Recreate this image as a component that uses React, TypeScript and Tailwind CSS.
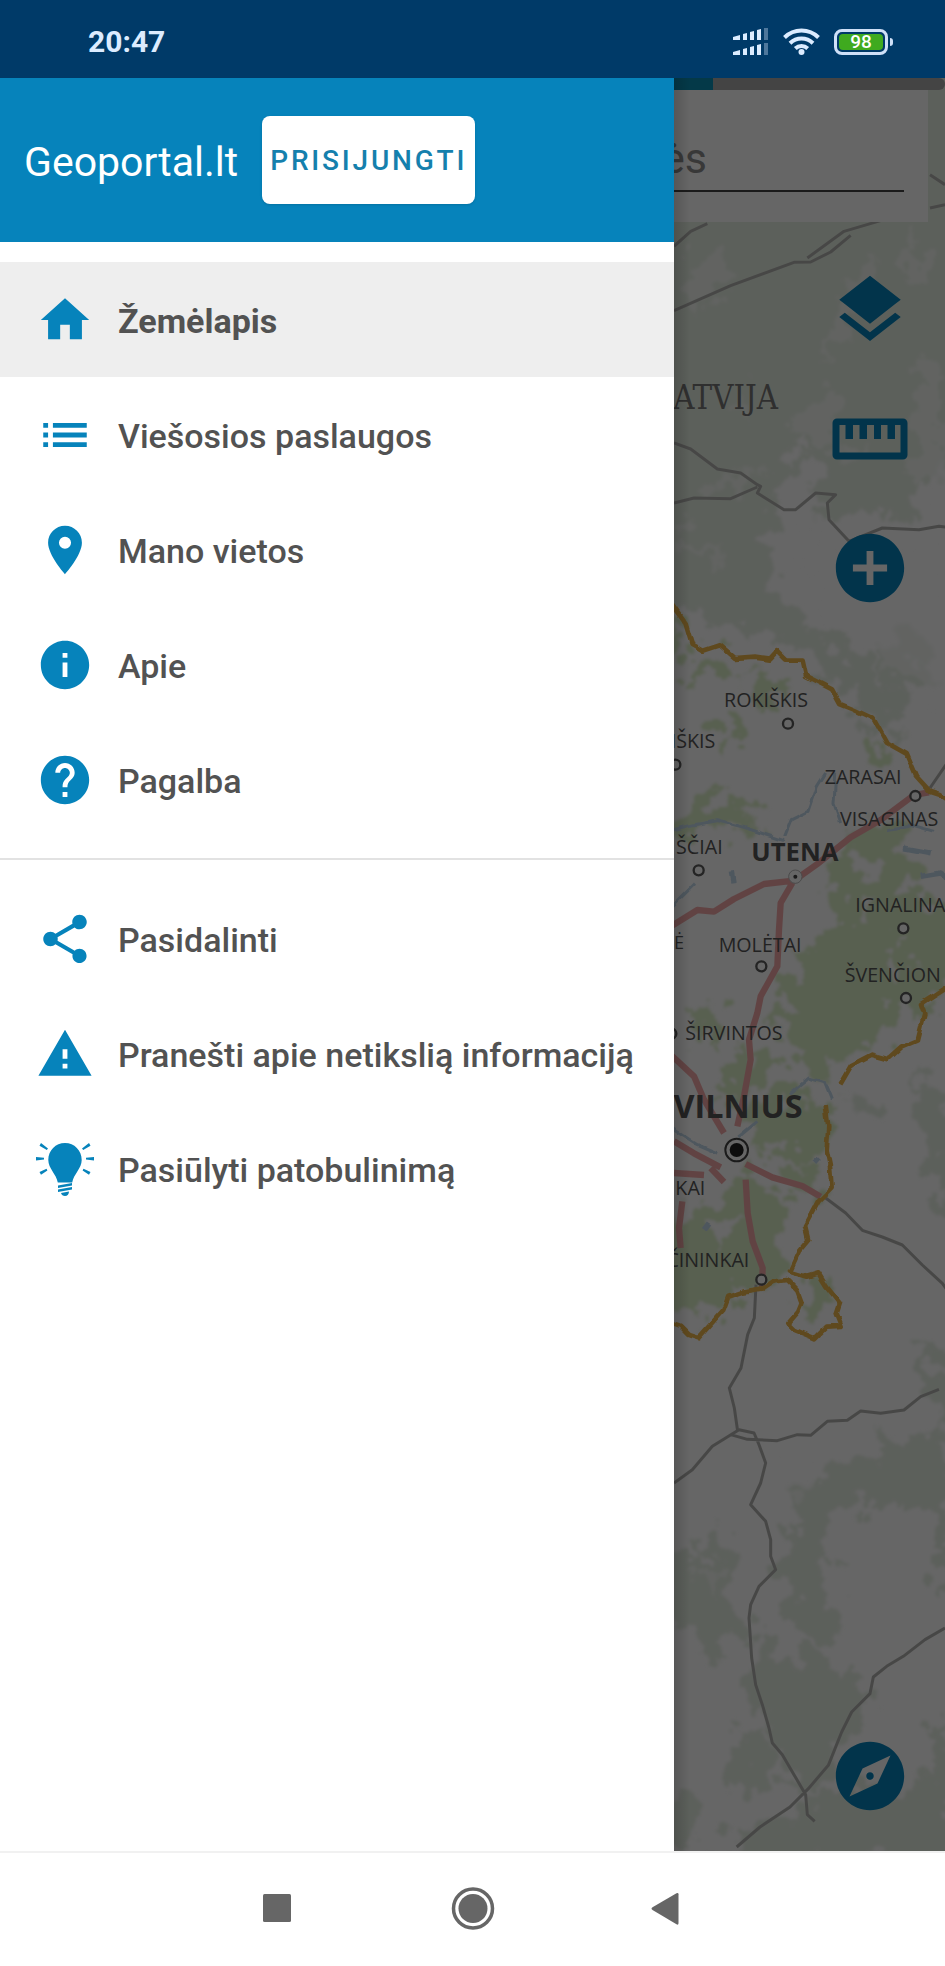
import React from 'react';
import {
  MdAddCircle,
  MdExplore,
  MdHelp,
  MdHome,
  MdInfo,
  MdLayers,
  MdList,
  MdPlace,
  MdShare,
  MdWarning,
} from 'react-icons/md';

interface MenuItem {
  label: string;
  icon: React.ReactNode;
  active?: boolean;
}

interface MapLabel {
  text: string;
  x: number;
  y: number;
  size: number;
  bold?: boolean;
  end?: boolean;
}

const BulbIcon = () => (
  <svg viewBox="0 0 58 58" className="size-[58px]" fill="currentColor">
    <path d="M29 3c-9.4 0-16.7 7.4-16.7 17 0 8.500 8 14 9.500 22.500h14.400C37.700 34 45.700 28.500 45.700 20 45.700 10.400 38.400 3 29 3z" />
    <path d="M22 45.500l14-2.500v2.500l-14 2.500zM22 49.500l14-2.500v2.500l-14 2.500zM25 53l8-1.500c0 2.500-1.500 4.500-4 4.500-2 0-3.500-1-4-3z" />
    <path d="M0 17l8 .8v1.800l-8 .8zM58 17l-8 .8v1.800l8 .8zM5 3l7 5.500-1.200 1.500L3.500 5.800zM53 3l-7 5.500 1.200 1.500 7.300-4.200zM3.500 32l7-3.200.9 1.600L5 34.800zM54.500 32l-7-3.200-.9 1.600L53 34.800z" />
  </svg>
);

const RulerIcon = () => (
  <svg viewBox="0 0 82 82" className="size-[82px]" fill="currentColor">
    <path
      fillRule="evenodd"
      d="M8 20.500h66a4.500 4.500 0 0 1 4.500 4.500v32a4.500 4.500 0 0 1-4.500 4.500H8A4.500 4.500 0 0 1 3.500 57V25A4.500 4.500 0 0 1 8 20.500zM10.500 27v27.500h61V27H66v14h-7.500V27h-6.500v14h-7V27h-7v14h-7.500V27H24v14h-7.500V27z"
    />
  </svg>
);

const SignalIcon = () => (
  <svg viewBox="0 0 36 28" className="h-7 w-9" fill="currentColor">
    <path d="M0 9l7-2v5H0zM10 6l4-1v7h-4zM17 4l4-1v9h-4zM24 2l4-1v11h-4z" />
    <path d="M0 24l7-2v5H0zM10 21l4-1v7h-4zM17 19l4-1v9h-4zM24 17l4-1v11h-4z" />
    <path opacity=".35" d="M31 0h4v12h-4zM31 15h4v12h-4z" />
  </svg>
);

const WifiIcon = () => (
  <svg viewBox="0 0 37 28" className="h-7 w-[37px]" fill="none" stroke="currentColor" strokeWidth="4">
    <path d="M1.500 9.500C11 .2 26 .2 35.500 9.500M7 15.200c6.500-6.300 16.500-6.300 23 0M12.300 20.500c3.500-3.300 8.900-3.300 12.400 0" />
    <circle cx="18.500" cy="24" r="3" fill="currentColor" stroke="none" />
  </svg>
);

const MAIN_ITEMS: MenuItem[] = [
  { label: 'Žemėlapis', icon: <MdHome />, active: true },
  { label: 'Viešosios paslaugos', icon: <MdList /> },
  { label: 'Mano vietos', icon: <MdPlace /> },
  { label: 'Apie', icon: <MdInfo /> },
  { label: 'Pagalba', icon: <MdHelp /> },
];

const EXTRA_ITEMS: MenuItem[] = [
  { label: 'Pasidalinti', icon: <MdShare /> },
  { label: 'Pranešti apie netikslią informaciją', icon: <MdWarning /> },
  { label: 'Pasiūlyti patobulinimą', icon: <BulbIcon /> },
];

// Map units: three per screen pixel
const LABELS: MapLabel[] = [
  { text: 'ROKIŠKIS', x: 150, y: 1886, size: 59 },
  { text: 'IŠKIS', x: 124, y: 2011, size: 59, end: true },
  { text: 'ZARASAI', x: 452, y: 2117, size: 59 },
  { text: 'VISAGINAS', x: 498, y: 2244, size: 59 },
  { text: 'ŠČIAI', x: 146, y: 2328, size: 59, end: true },
  { text: 'UTENA', x: 232, y: 2350, size: 77, bold: true },
  { text: 'IGNALINA', x: 544, y: 2502, size: 59 },
  { text: 'Ė', x: 0, y: 2612, size: 54 },
  { text: 'MOLĖTAI', x: 134, y: 2623, size: 59 },
  { text: 'ŠVENČION', x: 512, y: 2711, size: 59 },
  { text: 'ŠIRVINTOS', x: 34, y: 2885, size: 59 },
  { text: 'VILNIUS', x: 386, y: 3121, size: 97, bold: true, end: true },
  { text: 'KAI', x: 94, y: 3352, size: 59, end: true },
  { text: 'ČININKAI', x: 226, y: 3566, size: 59, end: true },
];

const TOWNS = [
  [342, 1937],
  [4, 2060],
  [724, 2154],
  [74, 2377],
  [688, 2551],
  [262, 2665],
  [696, 2760],
  [-8, 2867],
  [262, 3605],
];

const MenuList: React.FC<{ items: MenuItem[] }> = ({ items }) => (
  <ul>
    {items.map((item) => (
      <li key={item.label}>
        <a
          href="#"
          className={`flex h-[115px] items-center gap-6 pl-9 text-[34px] leading-10 whitespace-nowrap text-[#525252] ${
            item.active ? 'bg-[#eeeeee] font-bold' : 'font-medium'
          }`}
        >
          <span className="text-[58px] text-[#0683bb]">{item.icon}</span>
          <span className="pt-0.5">{item.label}</span>
        </a>
      </li>
    ))}
  </ul>
);

const MapCanvas = () => (
  <svg
    viewBox="0 0 813 5319"
    preserveAspectRatio="xMinYMin slice"
    className="absolute inset-0 size-full"
    fontFamily='"Open Sans", "Noto Sans", sans-serif'
  >
    <defs>
      <filter id="rough" x="-10%" y="-5%" width="120%" height="110%">
        <feTurbulence type="fractalNoise" baseFrequency="0.014" numOctaves="5" seed="7" />
        <feDisplacementMap in="SourceGraphic" scale="190" xChannelSelector="R" yChannelSelector="G" />
        <feGaussianBlur stdDeviation="4" />
      </filter>
      <filter id="wiggle" x="-10%" y="-5%" width="120%" height="110%">
        <feTurbulence type="fractalNoise" baseFrequency="0.03" numOctaves="1" seed="3" />
        <feDisplacementMap in="SourceGraphic" scale="18" xChannelSelector="R" yChannelSelector="G" />
      </filter>
    </defs>
    <rect width="813" height="5319" fill="#fefefe" />

    {/* Forests beyond the border */}
    <g filter="url(#rough)" fill="#e7f0e4">
      <path d="M-100-100H950V1180L760 1190 700 1330 560 1300 430 1330 420 1100 350 1140 280 1400 330 1590 520 1720 700 1850 640 1980 480 1830 400 1720 300 1680 130 1640 60 1580-100 1600z" />
      <path d="M690 1640l60 40 10 150-80 20-70-90z" />
      <path d="M700 2980l80 60 60-20v420l-60-60-20-220zM530 3040l90 20-40 60-50-20zM700 3780l70 40 60 120v620l-30-60-30-180-110-60-80 40-40-30-50 20-40 200 60 170-70 30-90-60-40-150 50-130 0-120 120-40 140-100 200-40z" />
      <path d="M-20 4410l90 20 70-60 60 60-20 120 40 130-90 40-80-60-70-60zM220 4680l60-20 50 90 90-40 60 30 10 90 100-20-40 160-60 40-70 150-60-50-60-130-60-110zM180 4960l110 20 10 130-70 60-50-50zM370 5220l90-90 200 10 180-60v280H60l120-90zM-20 5150l60 20 60 70-60 80h-60zM770 4960l50-20v200l-50-60z" />
    </g>
    <g filter="url(#rough)" fill="#fefefe" fillOpacity=".6">
      <path d="M90 520l60-20 20 60-70 110-50 40-20-60zM560 560l60 0-30 60-80 170-80 60 40-140zM700 480l60 60-30 70-50-60zM730 830l80 20v400l-100-60 20-160zM430 960l70 20-10 90-90 20-30-70zM200 950l50 20-10 60-60-20zM130 1170l70 30 50-20-50 60-90-10zM10 1350l100 60 60-20-50 60-110-40zM480 1080l80-10-20 60-60 10zM380 1280l90 60-40 140-60-50zM100 630l30 0 0 60-50-10z" />
      <path d="M450 1420l360-30v500l-130-100-110-90-100-20-40-110zM380 4130l50 40-30 90-60-20zM100 4440l50 20-20 70-50-30z" />
    </g>

    {/* Forests inside the border */}
    <g filter="url(#rough)" fill="#dcefc8">
      <path d="M-30 1600l50 60 10 90-60 10zM90 1720l90 10 40 60-60 20-120-10zM220 1800l70-10 60 40-30 60-60-40zM130 1940l50-20 20 60-30 50-50-50zM40 2170l90-20 60 50 90 40-70 30-110-30-80 40zM560 1990l50-30 40 70-60 40zM480 2330l90-90 110 30 60 80-40 110 90 20 60 120-10 140-120 60-110-20-160 20-60-150 70-130z" />
      <path d="M395 2630l180 10 130 0-50 110-40 120-110 70-60 100-60-60-30-80-70-60 100-40-60-70zM90 2780l60 30 10 60-30 60-70-70zM210 2900l60 10 50 30-60 70-90 60-50-30zM250 3070l130-20 90 70-10 100-60 40-90-60-80 30zM350 3250l80 20 20 90-80 20-50-60zM40 3400l110-40 40-80 80 20 70 90-20 130 10 60-30 50-100-10-50 80-90-20-100 10v-240zM40 3650l60 20-30 50-50-30z" />
      <path d="M400 3630l60 0 20 70-40 30-50-40z" />
    </g>
    <g filter="url(#rough)" fill="#fefefe">
      <path d="M530 2340l80-10 20 50-70 40zM640 2660l40-50 40 40-40 60zM110 3460l60-40 20 50-60 40zM560 2500l30-20 20 40-40 20z" />
    </g>

    {/* Water */}
    <g fill="none" stroke="#c3d9ec" strokeWidth="9" strokeLinejoin="round" filter="url(#wiggle)">
      <path d="M332 2275l20-50 50-25 25-75 25-40M-20 2260l80-20 70-12 80 20 60 20 60 20M485 2090l-5 90 20 55M-10 2490l70-70M345 3050l60-50 50 15 20 50M640 2255l70-15 70 20M-10 3150l80 50 60 25M190 3180l60-50" />
      <path d="M740 2395l60-10 30 20M175 2380l5 30M90 3455l15-20M425 3245l10 10M690 2310l80 15" strokeWidth="16" />
    </g>

    {/* Roads */}
    <g fill="none" stroke="#b2b2b0" strokeWidth="9" strokeLinejoin="round">
      <path d="M0 698l170-75 190-70 50-1 60-30 60-50M0 505l50-45 50-23M400 540l110-80 120-35M768 290l45 30M768 390l45-10" />
      <path d="M0 1095l50 18 80 60 70 12 50 35 10 5-10 20 80 50h35l60-50 60 5-25 25 5 50 60 65 100-40 110 5 60-10 90 10M0 1275l60-15 110 2 80-35" />
      <path d="M768 2130l55-80M455 3360l60 45 50 52 60 20 60 24 60 60 60 55 45 60M246 3620l-5 100-20 50-20 100-35 60 15 60 10 70" />
      <path d="M0 4215l55-40 60-70 80-50 45 10 15 35 20 55-15 60-30 65 45 50 15 55v50l15 40-50 50-25 55-5 40 8 120 12 80 20 60 20 70 10 45 30 35 35 60 35 60 5 60 22 20M170 4070l50 14 90 4 60-18 40 2 50-42 60-3 40-28 60 7 70-10 50-40 55-22M813 4650l-60 35-65 50-50 30-40 32-10 50-55 55-30 60-40 100-60 70-55 55-90 60-70 60" />
    </g>
    <g fill="none" stroke="#f2a9a9" strokeWidth="19" strokeLinejoin="round">
      <path d="M-10 2546l80-50 50 5 60-38 90-45 90-10 70-50 100-80 90-52 100-75 45-8M355 2415l-35 60-5 80-5 110-50 90-10 50-25 80 5 60-20 110-20 90" />
      <path d="M-10 2930l70 65 30 70 60 100M0 3190l60 36 80 42M0 3285l90 6M110 3270l40 42M215 3258l80 40 90 26 55 32M215 3305l6 100 15 85 30 80-2 60M25 3370l-10 80 5 60" />
    </g>
    <g fill="none" stroke="#eeb64c" strokeWidth="14" strokeLinejoin="round" filter="url(#wiggle)">
      <path d="M-10 1575l45 63 18 60 35 20 50-16 45 38 60-4 45 6 20-22 28 28h50l10 46 78 40 24 44 40 16 60 28 40 72 60 34 28 66 40 44 30 10 50 34" />
      <path d="M825 2724l-84 54 10 30-20 80-48 20-40 36-50-14-62 32-35 60" />
      <path d="M455 3081L463 3146 458 3216 468 3266 473 3331 433 3371 393 3446 403 3486 378 3516 348 3581 398 3596 433 3586 458 3626 498 3676 488 3706 503 3744 458 3746 423 3781 363 3756 343 3736 373 3701 383 3676 368 3636 338 3606 298 3611 268 3631 208 3641 163 3656 148 3696 108 3741 73 3781 43 3771 18 3746-10 3736" />
    </g>

    {/* Towns */}
    <g fill="#fefefe" stroke="#5a5a5a" strokeWidth="7">
      {TOWNS.map(([x, y]) => (
        <circle key={`${x}-${y}`} cx={x} cy={y} r="15" />
      ))}
    </g>
    <circle cx="364" cy="2396" r="20" fill="#fefefe" stroke="#bbbbbb" strokeWidth="3" />
    <circle cx="364" cy="2396" r="6" fill="#444444" />
    <circle cx="188" cy="3216" r="34" fill="#fefefe" stroke="#444444" strokeWidth="6" />
    <circle cx="188" cy="3216" r="21" fill="#222222" />

    <text x="312" y="992" fontSize="98" textAnchor="end" fill="#777777" fontFamily='"DejaVu Serif Condensed", "DejaVu Serif", serif'>
      ATVIJA
    </text>
    {LABELS.map((label) => (
      <text
        key={label.text}
        x={label.x}
        y={label.y}
        fontSize={label.size}
        fontWeight={label.bold ? 700 : 400}
        textAnchor={label.end ? 'end' : 'start'}
        fill="#565656"
      >
        {label.text}
      </text>
    ))}
  </svg>
);

const StatusBar = () => (
  <header className="flex h-[78px] shrink-0 items-center justify-between bg-[#003a68] pt-1.5 pr-[52px] pl-[88px] text-[#dcecff]">
    <time className="text-[30px] leading-9 font-bold">20:47</time>
    <div className="flex items-center gap-3.5">
      <SignalIcon />
      <WifiIcon />
      <div className="flex items-center gap-0.5">
        <span className="flex h-[26px] w-[54px] rounded-lg border-[3px] border-[#cfe0f8] p-0.5">
          <span className="flex flex-1 items-center justify-center rounded-sm bg-[#3faa1f] text-[19px] leading-4 font-medium text-white">
            98
          </span>
        </span>
        <span className="h-2 w-[3px] rounded-r-sm bg-[#cfe0f8]" />
      </div>
    </div>
  </header>
);

const Drawer = () => (
  <aside className="flex w-[674px] max-w-[80%] shrink-0 flex-col bg-white">
    <div className="flex h-[164px] items-center gap-6 bg-[#0683bb] pl-6">
      <h1 className="pt-1 text-[41px] leading-[48px] text-white">Geoportal.lt</h1>
      <button
        type="button"
        className="h-[88px] rounded-lg bg-white px-2 pt-0.5 text-[28px] leading-9 font-medium tracking-widest text-[#1580ad] shadow-sm"
      >
        PRISIJUNGTI
      </button>
    </div>
    <nav className="pt-5">
      <MenuList items={MAIN_ITEMS} />
      <hr className="my-[21px] border-t-2 border-[#e2e2e2]" />
      <MenuList items={EXTRA_ITEMS} />
    </nav>
  </aside>
);

const MapPage = () => (
  <section className="relative flex min-w-0 flex-1 flex-col overflow-hidden">
    <MapCanvas />
    <div className="relative flex h-3 overflow-hidden rounded-r-full bg-[#aaaaaa]">
      <div className="w-[39px] bg-[#0a90b5]" />
    </div>
    <form className="relative mr-[17px] -ml-3 h-[132px] bg-white pt-10 pr-6">
      <input
        aria-label="Paieška"
        defaultValue="ės"
        className="h-[62px] w-full border-b-2 border-[#444444] bg-transparent pb-1 text-[43px] text-[#8c8c8c] outline-none"
      />
    </form>
    <div className="relative flex flex-1 flex-col items-end gap-[47px] pt-[47px] pr-[34px] pb-[34px] text-[82px] text-[#0683bb]">
      <button type="button" aria-label="Sluoksniai">
        <MdLayers />
      </button>
      <button type="button" aria-label="Matuoti">
        <RulerIcon />
      </button>
      <button type="button" aria-label="Pridėti">
        <MdAddCircle />
      </button>
      <button type="button" aria-label="Kompasas" className="mt-auto">
        <MdExplore />
      </button>
    </div>
    <div className="absolute inset-0 bg-black/60" />
    <div className="absolute inset-y-0 left-0 w-4 bg-linear-to-r from-black/15 to-transparent" />
  </section>
);

const NavigationBar = () => (
  <footer className="flex h-[115px] shrink-0 items-center justify-center gap-[124px] border-t-2 border-[#f1f1f1] bg-white text-[#666666]">
    <button type="button" aria-label="Programos">
      <svg viewBox="0 0 72 72" className="size-[72px]" fill="currentColor">
        <rect x="22" y="20" width="28" height="28" rx="1.500" />
      </svg>
    </button>
    <button type="button" aria-label="Pradžia">
      <svg viewBox="0 0 72 72" className="size-[72px]" fill="currentColor">
        <circle cx="36" cy="34.500" r="14.500" />
        <circle cx="36" cy="34.500" r="19.500" fill="none" stroke="currentColor" strokeWidth="3.500" />
      </svg>
    </button>
    <button type="button" aria-label="Atgal">
      <svg viewBox="0 0 72 72" className="size-[72px]" fill="currentColor">
        <path d="M19.500 33.300L43.500 19.300q2-1 2 1v29q0 2-2 1L19.500 36q-2-1.300 0-2.700z" />
      </svg>
    </button>
  </footer>
);

export default function App() {
  return (
    <div className="flex min-h-screen flex-col bg-white font-[Roboto,sans-serif]">
      <StatusBar />
      <main className="flex flex-1">
        <Drawer />
        <MapPage />
      </main>
      <NavigationBar />
    </div>
  );
}
